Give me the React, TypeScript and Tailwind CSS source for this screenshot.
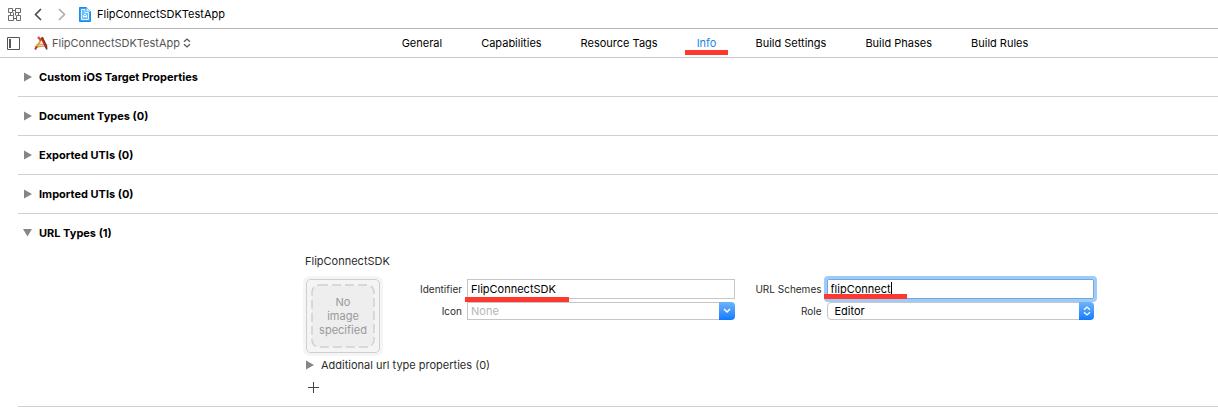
import React, { useState } from "react";

const tabs = ["General", "Capabilities", "Resource Tags", "Info", "Build Settings", "Build Phases", "Build Rules"];
const closedSections = ["Custom iOS Target Properties", "Document Types (0)", "Exported UTIs (0)", "Imported UTIs (0)"];

function Triangle({ open = false }: { open?: boolean }) {
  return (
    <svg className="size-[10px] shrink-0" viewBox="0 0 10 10" fill="#868686" aria-hidden="true">
      <path d={open ? "M0 1h9L4.500 8.500z" : "M1 0.500v9L9 5z"} />
    </svg>
  );
}

function GridIcon() {
  return (
    <svg className="size-[13px]" viewBox="0 0 13 13" fill="none" stroke="#6b6b6b" aria-hidden="true">
      <path d="M.5.5h4v4h-4zM7.500.5h5v4h-5zM.5 7.500h5v5h-5zM8.500 7.500h4v5h-4zM4.500 2.500h3M2.500 4.500v3M10.500 4.500v3M5.500 10.500h3M5.500 4.500v3M7.500 4.500v3" />
    </svg>
  );
}

function Chevron({ flip = false, color }: { flip?: boolean; color: string }) {
  return (
    <svg className="h-[13px] w-[8px]" viewBox="0 0 8 13" fill="none" stroke={color} strokeWidth="1.600" aria-hidden="true">
      <path d={flip ? "M1 1l5.500 5.500L1 12" : "M7 1L1.500 6.500L7 12"} />
    </svg>
  );
}

function ProjectIcon() {
  return (
    <svg className="h-[15px] w-[12px]" viewBox="0 0 12 15" aria-hidden="true">
      <path d="M.5.5h7l4 4v10H.5z" fill="#35a0f5" stroke="#1c8bea" />
      <path d="M7.500.5v4h4z" fill="#d9efff" />
      <path d="M2.500 2.500h3.500v3h3.500v7h-7z" fill="#6bbcf9" stroke="#e3f3fe" />
      <path d="M4.500 10.500v-2L6 7l1.500 1.500v2M4 9.500h4" fill="none" stroke="#fff" />
    </svg>
  );
}

function AppIcon() {
  return (
    <svg className="h-[14px] w-[15px]" viewBox="0 0 15 14" fill="none" aria-hidden="true">
      <path d="M0 10l3-2 9-.5 3 1-3 2-11 1.500z" fill="#ecd9b0" />
      <path d="M2.500 8.300h9M1 11l11-1" stroke="#b98c55" strokeWidth=".8" />
      <path d="M2.500 11.500L8.500 1.500" stroke="#dda92c" strokeWidth="2" />
      <path d="M1 13.500l2-3" stroke="#a3382a" strokeWidth="1.800" />
      <path d="M4 1l3 3.500" stroke="#d8473b" strokeWidth="2.200" />
      <path d="M7.500 1.500L12.500 12" stroke="#b52d25" strokeWidth="2.300" />
      <path d="M8.500 1l4.500 9.500" stroke="#632019" strokeWidth=".8" />
      <path d="M12 11l1 2.500" stroke="#444" strokeWidth="1.500" />
    </svg>
  );
}

function UpDown({ color }: { color: string }) {
  return (
    <svg className="h-[10px] w-[8px]" viewBox="0 0 8 10" fill="none" stroke={color} strokeWidth="1.300" aria-hidden="true">
      <path d="M1 3.700L4 1l3 2.700M1 6.300L4 9l3-2.700" />
    </svg>
  );
}

function ImageWell() {
  return (
    <button
      type="button"
      className="relative flex size-[74px] shrink-0 items-center justify-center rounded-[4px] border border-[#cfcfcf] bg-[#f4f4f4] text-[11px] leading-[14px] text-[#999] outline-3 outline-[#f5f5f5]"
    >
      <svg className="absolute inset-1 size-16" viewBox="0 0 64 64" aria-hidden="true">
        <rect x="1" y="1" width="62" height="62" rx="7" fill="#eee" stroke="#d0d0d0" strokeWidth="1.500" strokeDasharray="9 4" />
      </svg>
      <span className="relative">No<br />image<br />specified</span>
    </button>
  );
}

function Mark({ className }: { className: string }) {
  return <span aria-hidden="true" className={`pointer-events-none absolute h-[5px] bg-[#ff382d] ${className}`} />;
}

export default function App() {
  const [identifier, setIdentifier] = useState("FlipConnectSDK");
  const [scheme, setScheme] = useState("flipConnect");
  const [icon, setIcon] = useState("");

  return (
    <div className="min-w-[1100px] bg-white font-['Inter','Liberation_Sans',sans-serif] text-[11px] leading-[14px] text-black">
      <header className="flex h-[29px] items-center border-b border-[#b4b4b4] pl-2">
        <button type="button" aria-label="Related items"><GridIcon /></button>
        <button type="button" aria-label="Back" className="ml-[13px]"><Chevron color="#4a4a4a" /></button>
        <button type="button" aria-label="Forward" className="ml-4"><Chevron flip color="#ababab" /></button>
        <span className="ml-[13px] flex items-center gap-[6px]"><ProjectIcon />FlipConnectSDKTestApp</span>
      </header>

      <div className="flex h-[29px] items-center border-b border-[#c8c8c8]">
        <div className="flex w-[212px] shrink-0 items-center pl-[7px]">
          <button type="button" aria-label="Show targets list">
            <svg className="size-[13px]" viewBox="0 0 13 13" aria-hidden="true">
              <path d="M.5.5h12v12H.5z" fill="none" stroke="#555" />
              <path d="M2 2h2v9H2z" fill="#555" />
            </svg>
          </button>
          <button type="button" className="ml-[14px] flex items-center gap-[3px] text-[#555]">
            <AppIcon />FlipConnectSDKTestApp<UpDown color="#555" />
          </button>
        </div>
        <nav className="flex flex-1 justify-center gap-[39px]">
          {tabs.map((tab) => (
            <a key={tab} href="#" className={tab === "Info" ? "relative text-[#1b85e5]" : "relative"}>
              {tab}
              {tab === "Info" && <Mark className="-inset-x-[12px] top-[14px]" />}
            </a>
          ))}
        </nav>
      </div>

      <main className="pl-[18px]">
        {closedSections.map((title) => (
          <section key={title} className="border-b border-[#d0d0d0]">
            <button type="button" className="flex h-[38px] items-center gap-[6px] pl-[5px] font-bold"><Triangle />{title}</button>
          </section>
        ))}
        <section className="border-b border-[#d0d0d0]">
          <button type="button" className="flex h-[38px] items-center gap-[6px] pl-[5px] font-bold"><Triangle open />URL Types (1)</button>
          <div className="pt-[2px] pr-[124px] pb-[13px] pl-[287px] text-[#2b2b2b]">
            <h2>FlipConnectSDK</h2>
            <div className="mt-[11px] flex items-start pl-px">
              <ImageWell />
              <div className="grid flex-1 grid-cols-[82px_1fr_82px_1fr] items-center gap-x-[5px] gap-y-[3px]">
                <label htmlFor="identifier" className="text-right text-[10px]">Identifier</label>
                <div className="relative">
                  <input id="identifier" value={identifier} onChange={(e) => setIdentifier(e.target.value)} className="block h-5 w-full border border-[#c6c6c6] px-[3px] text-black outline-none" />
                  <Mark className="-left-[2px] top-[18px] w-[104px]" />
                </div>
                <label htmlFor="scheme" className="text-right text-[10px]">URL Schemes</label>
                <div className="relative">
                  <input id="scheme" value={scheme} onChange={(e) => setScheme(e.target.value)} className="block h-5 w-full rounded-[1px] border border-[#72a8e0] px-[3px] text-black outline-3 outline-[#9fcbfb]" />
                  <span aria-hidden="true" className="absolute left-[64px] top-[3px] h-[13px] w-px bg-black" />
                  <Mark className="-left-[3px] top-[15px] w-[83px]" />
                </div>
                <label htmlFor="icon" className="text-right text-[10px]">Icon</label>
                <div className="flex">
                  <input id="icon" placeholder="None" value={icon} onChange={(e) => setIcon(e.target.value)} className="block h-[18px] min-w-0 flex-1 border border-r-0 border-[#c6c6c6] px-[3px] outline-none placeholder:text-[#b5b5b5]" />
                  <button type="button" aria-label="Choose icon" className="flex h-[18px] w-4 items-center justify-center rounded-r-[4px] bg-linear-to-b from-[#6cb3fa] to-[#087aff]">
                    <svg className="h-[6px] w-[8px]" viewBox="0 0 8 6" fill="none" stroke="#fff" strokeWidth="1.500" aria-hidden="true"><path d="M1 1l3 3 3-3" /></svg>
                  </button>
                </div>
                <label htmlFor="role" className="text-right text-[10px]">Role</label>
                <div className="relative">
                  <select id="role" defaultValue="Editor" className="block h-[18px] w-full appearance-none rounded-[4px] border border-[#c6c6c6] pl-[7px] text-black outline-none">
                    <option>None</option>
                    <option>Editor</option>
                    <option>Viewer</option>
                  </select>
                  <span className="pointer-events-none absolute inset-y-0 right-0 flex w-[15px] items-center justify-center rounded-r-[4px] bg-linear-to-b from-[#6cb3fa] to-[#087aff]"><UpDown color="#fff" /></span>
                </div>
              </div>
            </div>
            <button type="button" className="mt-[5px] flex items-center gap-[6px]"><Triangle />Additional url type properties (0)</button>
            <button type="button" aria-label="Add URL type" className="mt-[10px] ml-[3px] block">
              <svg className="size-[11px]" viewBox="0 0 11 11" stroke="#444" aria-hidden="true"><path d="M5.500 0v11M0 5.500h11" /></svg>
            </button>
          </div>
        </section>
      </main>
    </div>
  );
}
